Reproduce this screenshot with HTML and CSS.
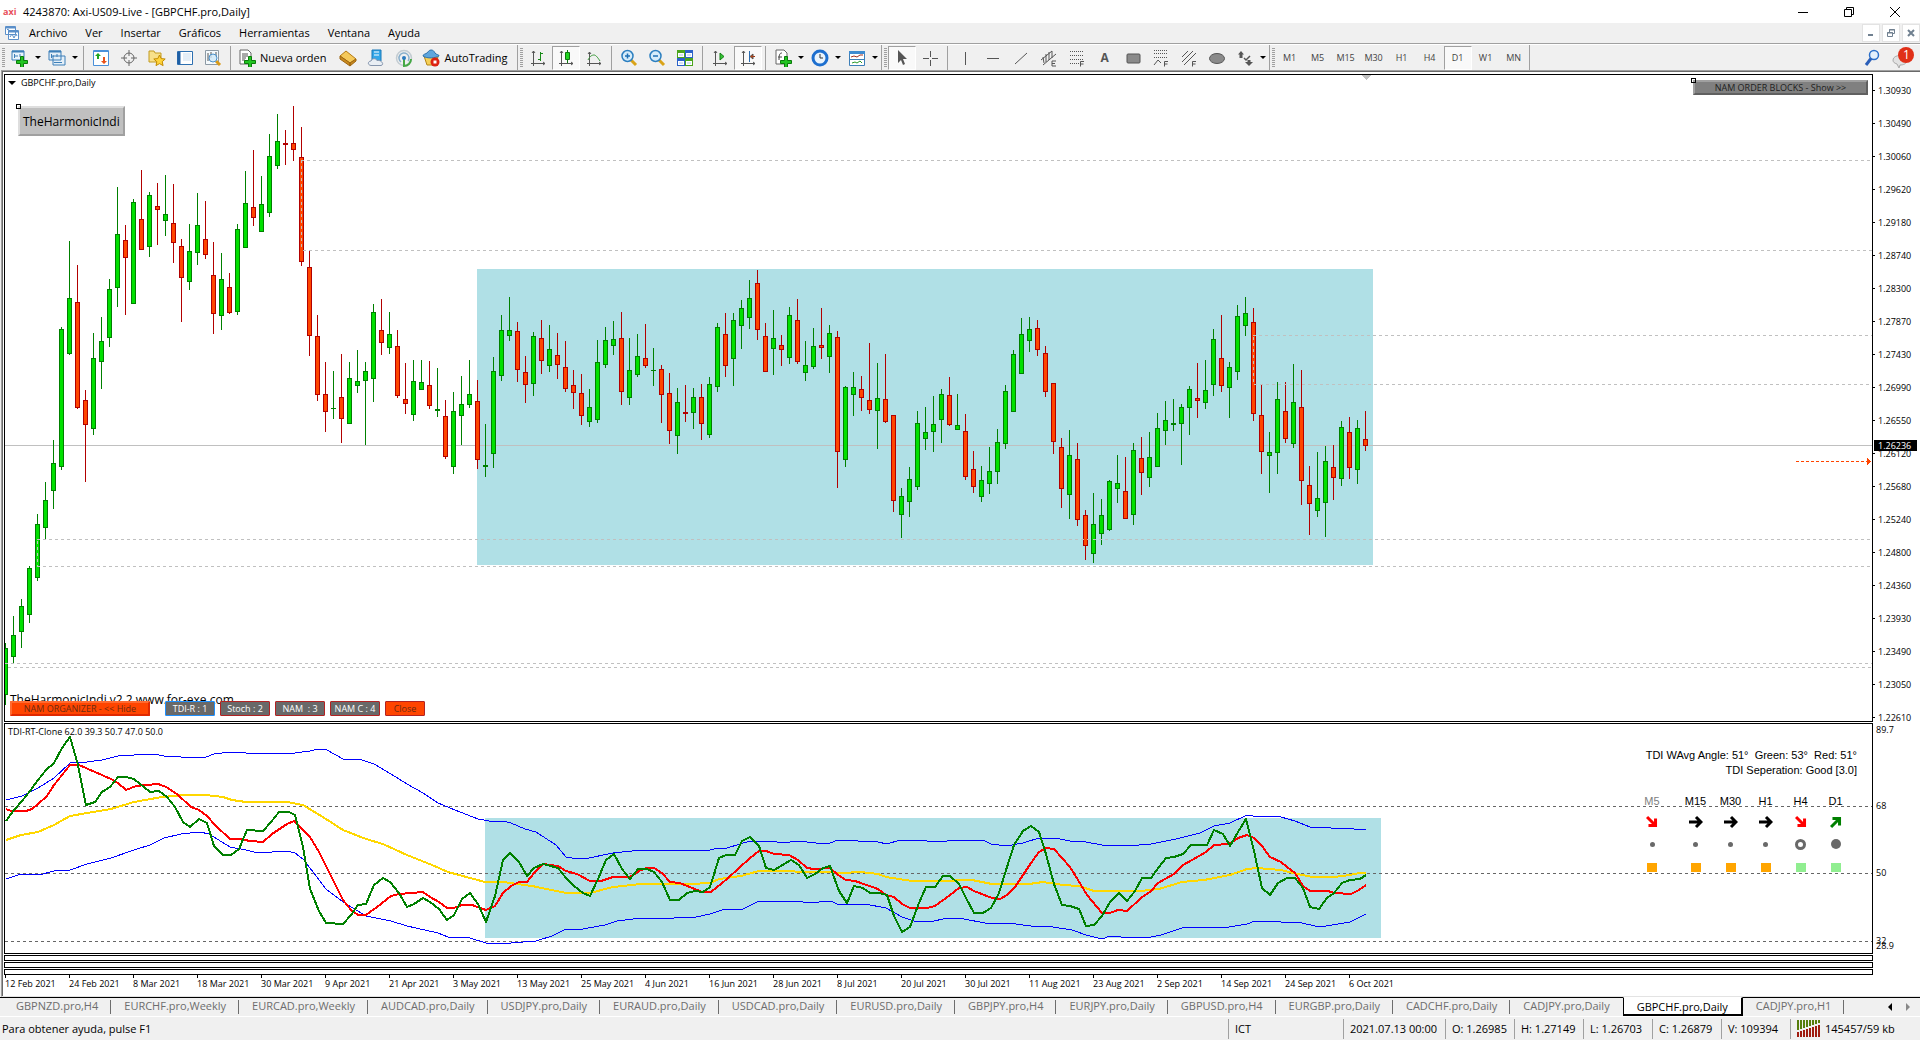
FILE: index.html
```html
<!DOCTYPE html>
<html lang="es">
<head>
    <meta charset="UTF-8">
    <meta name="viewport" content="width=device-width, initial-scale=1.0">
    <title>4243870: Axi-US09-Live - [GBPCHF.pro,Daily]</title>
    <link rel="stylesheet" href="styles.css">
</head>
<body>
    <header class="titlebar">
        <span class="brand">axi</span>
        <h1>4243870: Axi-US09-Live - [GBPCHF.pro,Daily]</h1>
        <button class="win" aria-label="Minimizar"><svg width="12" height="12"><path d="M1 6.500h10" stroke="#000"/></svg></button>
        <button class="win" aria-label="Restaurar"><svg width="12" height="12" fill="none" stroke="#000"><path d="M1.500 3.500h7v7h-7zM3.500 3.500v-2h7v7h-2"/></svg></button>
        <button class="win" aria-label="Cerrar"><svg width="12" height="12"><path d="M1 1l10 10M11 1l-10 10" stroke="#000"/></svg></button>
    </header>

    <nav class="menubar">
        <svg width="16" height="16" viewBox="0 0 16 16" fill="#fff" stroke="#5b8fc9"><path d="M1.500 1.500h10v8h-10zM4.500 5.500h10v9h-10z"/><path d="M2 2.500h9M5 6.500h9" stroke-width="2"/><path d="M3 5l1-1 1 2M6 12l2-3 2 4 2-4 1 2" fill="none"/></svg>
        <button>Archivo</button>
        <button>Ver</button>
        <button>Insertar</button>
        <button>Gráficos</button>
        <button>Herramientas</button>
        <button>Ventana</button>
        <button>Ayuda</button>
        <div class="child-win">
            <button aria-label="Minimizar gráfico"><svg width="8" height="8"><path d="M1 6h5" stroke="#708090" stroke-width="2"/></svg></button>
            <button aria-label="Restaurar gráfico"><svg width="8" height="8" fill="none" stroke="#708090"><path d="M.5 3.500h5v4h-5zM2.500 3v-2.500h5v4h-2"/><path d="M0 4h6M2 1h6"/></svg></button>
            <button aria-label="Cerrar gráfico"><svg width="8" height="8"><path d="M1 1l6 6M7 1l-6 6" stroke="#708090" stroke-width="2"/></svg></button>
        </div>
    </nav>

    <div class="toolbar">
        <i class="grip"></i>
        <button class="drop" aria-label="Nuevo gráfico"><svg class="ico" viewBox="0 0 18 18"><path d="M1 2h12v9H1z" fill="#eaf4fc" stroke="#3d7fb8"/><path d="M1 2.500h12" stroke="#3d7fb8" stroke-width="2"/><path d="M3.500 5v4M3 7h4M9 5v3" stroke="#3d7fb8"/><path d="M9.500 7.500h3v4h4v3h-4v4h-3v-4h-4v-3h4z" fill="#21c421" stroke="#0b7a0b"/></svg></button>
        <button class="drop" aria-label="Perfiles"><svg class="ico" viewBox="0 0 18 18" fill="#e4eff8" stroke="#3d7fb8"><path d="M5 7h12v9H5zM1 2h12v9H1z"/><path d="M1 2.500h12" stroke-width="2"/><path d="M3.500 5v4M3 7h3M9 5v3M14 13.500h-8" fill="none"/></svg></button>
        <i class="sep"></i>
        <button aria-label="Observación del mercado"><svg class="ico" viewBox="0 0 18 18"><path d="M1.500 1.500h15v15h-15z" fill="#fff" stroke="#4a90d9"/><path d="M2 2h14" stroke="#4a90d9" stroke-width="2"/><path d="M6 4l3 3H7v3H5V7H3z" fill="#1fa51f"/><path d="M12 15l-3-3h2V8h2v4h2z" fill="#e8521a"/></svg></button>
        <button aria-label="Ventana de datos"><svg class="ico" viewBox="0 0 18 18" fill="none" stroke="#666"><circle cx="9" cy="9" r="5"/><path d="M9 1v6M9 11v6M1 9h6M11 9h6"/></svg></button>
        <button aria-label="Navegador"><svg class="ico" viewBox="0 0 18 18"><path d="M1 2h5l1 2h6v9H1z" fill="#f7e08a" stroke="#c29b21"/><path d="M11.500 6l1.700 3.600 4 .4-3 2.700.9 3.900-3.600-2-3.500 2 .8-3.900-3-2.700 4-.4z" fill="#ffd43b" stroke="#c28a00"/></svg></button>
        <button aria-label="Terminal"><svg class="ico" viewBox="0 0 18 18"><path d="M1.500 2.500h15v13h-15z" fill="#fff" stroke="#2d6fb0"/><path d="M3 3v12" stroke="#1e5fa5" stroke-width="3"/><path d="M7 5h8M7 7h8M7 9h8M7 11h8" stroke="#c9dcee"/></svg></button>
        <button aria-label="Probador de estrategias"><svg class="ico" viewBox="0 0 18 18"><path d="M1.500 1.500h13v14h-13z" fill="#f5fafd" stroke="#8d9aa5"/><path d="M4 4v8M7 3v6M12 3v5" stroke="#555"/><path d="M12 12l4 4" stroke="#d99a18" stroke-width="3"/><circle cx="9" cy="9" r="4" fill="#cfe8f8" fill-opacity=".8" stroke="#4a90c9"/></svg></button>
        <i class="sep"></i>
        <button class="wide"><svg class="ico" viewBox="0 0 18 18"><path d="M2 1h8l3 3v11H2z" fill="#fff" stroke="#666"/><path d="M4 5h6M4 7h6M4 9h4M4 11h3" stroke="#555"/><path d="M10.500 7.500h3v4h4v3h-4v4h-3v-4h-4v-3h4z" fill="#21c421" stroke="#0b7a0b"/></svg>Nueva orden</button>
        <button aria-label="MetaEditor"><svg class="ico" viewBox="0 0 18 18"><path d="M7 2l10 8-6 4L1 7z" fill="#f5c95a" stroke="#b57a12"/><path d="M1 7v3l10 7v-3zM11 17l6-5v-2l-6 4z" fill="#c98a1e" stroke="#9c6410"/></svg></button>
        <button aria-label="VPS"><svg class="ico" viewBox="0 0 18 18"><path d="M5 1h9v11H5z" fill="#35a7e8" stroke="#1878b8"/><path d="M7 3h5M7 6h5" stroke="#fff"/><path d="M4 16.500c-4-.5-3-4.500 0-4.500 1-3 5-3 6-.5 4-1 8 4 4 5z" fill="#e9eef4" stroke="#8595ad"/></svg></button>
        <button aria-label="Señales"><svg class="ico" viewBox="0 0 18 18" fill="none"><circle cx="9" cy="9" r="7.500" stroke="#c3ccd2" stroke-width="1.500"/><path d="M6 13a5 5 0 1 1 7-1" stroke="#8ab0cc" stroke-width="1.500"/><path d="M9 9v8c4 0 7-3 7-7" stroke="#45a845" stroke-width="2"/><circle cx="9" cy="9" r="2" fill="#2b7abf"/></svg></button>
        <button class="wide"><svg class="ico" viewBox="0 0 18 18"><path d="M2 7l3 9h8l3-8z" fill="#f5d057" stroke="#b58516"/><path d="M1 7c0-2 3-2 4-3s2-3 4-3 3 1 4 3 4 1 4 3c-3 2-12 3-16 0z" fill="#5fa6dd" stroke="#2d72ad"/><circle cx="13" cy="13" r="4.500" fill="#dd2211"/><path d="M11.500 11.500h3v3h-3z" fill="#fff"/></svg>AutoTrading</button>
        <i class="end"></i>

        <i class="grip"></i>
        <button aria-label="Gráfico de barras"><svg class="ico" viewBox="0 0 18 18" fill="none" stroke="#555"><path d="M4.500 2v15M2 14.500h14M3 4l1.500-2L6 4M14 13l2 1.500L14 16"/><path d="M11.500 3v9M11 4.500h3M9 10.500h3" stroke="#178a17"/></svg></button>
        <button class="on" aria-label="Velas japonesas"><svg class="ico" viewBox="0 0 18 18" fill="none" stroke="#555"><path d="M4.500 2v15M2 14.500h14M3 4l1.500-2L6 4M14 13l2 1.500L14 16"/><path d="M10.500 1v13" stroke="#0c780c"/><path d="M8.500 3.500h4v7h-4z" fill="#21d421" stroke="#0c780c"/></svg></button>
        <button aria-label="Gráfico de línea"><svg class="ico" viewBox="0 0 18 18" fill="none" stroke="#555"><path d="M4.500 3v14M2 14.500h14M3 5l1.500-2L6 5M14 13l2 1.500L14 16"/><path d="M3 11c2-4 4-5 6-5s4 3 6 6" stroke="#3a9a3a"/></svg></button>
        <i class="sep"></i>
        <button aria-label="Acercar"><svg class="ico" viewBox="0 0 18 18"><path d="M11 11l5 5" stroke="#d9a318" stroke-width="3"/><circle cx="7.500" cy="7" r="5.500" fill="#d5ecfa" stroke="#2c7fc0" stroke-width="1.500"/><path d="M5 7h5M7.500 4.500v5" stroke="#1d6fb5" stroke-width="1.500"/></svg></button>
        <button aria-label="Alejar"><svg class="ico" viewBox="0 0 18 18"><path d="M11 11l5 5" stroke="#d9a318" stroke-width="3"/><circle cx="7.500" cy="7" r="5.500" fill="#d5ecfa" stroke="#2c7fc0" stroke-width="1.500"/><path d="M5 7h5" stroke="#1d6fb5" stroke-width="1.500"/></svg></button>
        <button aria-label="Mosaico"><svg class="ico" viewBox="0 0 18 18"><path d="M1 1h8v8H1zM9 9h8v8H9z" fill="#4aa51c"/><path d="M9 1h8v8H9zM1 9h8v8H1z" fill="#2b62c9"/><path d="M2 4h6v4H2zM10 4h6v4h-6zM2 12h6v4H2zM10 12h6v4h-6z" fill="#fff"/><path d="M3 6h4M11 6h4M3 14h4M11 14h4" stroke="#a9c4e8"/></svg></button>
        <i class="sep"></i>
        <button aria-label="Desplazamiento automático"><svg class="ico" viewBox="0 0 18 18" fill="none" stroke="#555"><path d="M4.500 2v15M2 14.500h14M3 4l1.500-2L6 4M14 13l2 1.500L14 16"/><path d="M9 4v7l4-3.500z" fill="#35c435" stroke="#148014"/></svg></button>
        <button class="on" aria-label="Desplazar gráfico"><svg class="ico" viewBox="0 0 18 18" fill="none" stroke="#555"><path d="M4.500 2v15M2 14.500h14M3 4l1.500-2L6 4M14 13l2 1.500L14 16"/><path d="M10.500 2v11" stroke="#2b6cb0"/><path d="M16 7.500h-3" stroke="#b33000"/><path d="M11 7.500l3-2.500v5z" fill="#d33c00"/></svg></button>
        <i class="sep"></i>
        <button class="drop" aria-label="Indicadores"><svg class="ico" viewBox="0 0 18 18"><path d="M2 1h8l3 3v11H2z" fill="#fff" stroke="#666"/><path d="M5 11c0-6 1-7 3-7M4 8h4" stroke="#444" fill="none"/><path d="M10.500 7.500h3v4h4v3h-4v4h-3v-4h-4v-3h4z" fill="#21c421" stroke="#0b7a0b"/></svg></button>
        <button class="drop" aria-label="Periodicidad"><svg class="ico" viewBox="0 0 18 18"><circle cx="9" cy="9" r="7" fill="#eaf4fc" stroke="#1d6fcf" stroke-width="3"/><path d="M9 5v4h3" fill="none" stroke="#333"/></svg></button>
        <button class="drop" aria-label="Plantillas"><svg class="ico" viewBox="0 0 18 18"><path d="M1.500 2.500h15v14h-15z" fill="#fff" stroke="#3d7fb8"/><path d="M1 3.500h16" stroke="#3d8bd0" stroke-width="3"/><path d="M2 10.500h14" stroke="#3d7fb8"/><path d="M3 8l3-1 3 1 3-2h3" stroke="#a03020" fill="none"/><path d="M4 14l3-1 2 1 3-2 2 2" stroke="#2a9a2a" fill="none"/></svg></button>
        <i class="end"></i>

        <i class="grip"></i>
        <button class="on" aria-label="Cursor"><svg class="ico" viewBox="0 0 18 18"><path d="M5 1v13l3-3 2 5 2-1-2-5h4z" fill="#555"/></svg></button>
        <button aria-label="Cruz"><svg class="ico" viewBox="0 0 18 18"><path d="M9.500 2v6M9.500 11v6M2 9.500h6M11 9.500h6" stroke="#555"/></svg></button>
        <i class="sep"></i>
        <button aria-label="Línea vertical"><svg class="ico" viewBox="0 0 18 18"><path d="M9.500 3v13" stroke="#555"/></svg></button>
        <button aria-label="Línea horizontal"><svg class="ico" viewBox="0 0 18 18"><path d="M3 9.500h12" stroke="#555"/></svg></button>
        <button aria-label="Línea de tendencia"><svg class="ico" viewBox="0 0 18 18"><path d="M3 15L15 4" stroke="#555"/></svg></button>
        <button aria-label="Canal equidistante"><svg class="ico" viewBox="0 0 18 18" fill="none" stroke="#555"><path d="M1 11L12 2M3 16L16 5M3 8l1 6M6 5v8M9 3v8M12 2v7"/><path d="M16 12h-4v5h4M12 14.500h3"/></svg></button>
        <button aria-label="Retroceso de Fibonacci"><svg class="ico" viewBox="0 0 18 18" fill="none" stroke="#555"><path d="M2 2.500h14M2 6.500h14M2 10.500h14M2 14.500h9" stroke-dasharray="1 1"/><path d="M16 12.500h-3.500v5M12.500 15h3"/></svg></button>
        <button aria-label="Texto"><b class="letter">A</b></button>
        <button aria-label="Rectángulo"><svg class="ico" viewBox="0 0 18 18"><rect x="3" y="5" width="13" height="9" rx="1" fill="#8a8a8a" stroke="#555"/></svg></button>
        <button aria-label="Expansión de Fibonacci"><svg class="ico" viewBox="0 0 18 18" fill="none" stroke="#555"><path d="M2 1.500h14M2 4.500h14M2 8.500h14" stroke-dasharray="1 1"/><path d="M2 16l4-5 3 3M16 12.500h-3.500v5M12.500 15h3"/></svg></button>
        <button aria-label="Canal de Fibonacci"><svg class="ico" viewBox="0 0 18 18" fill="none" stroke="#555"><path d="M2 8l6-6M2 13L13 2M4 16L16 4"/><path d="M16 12.500h-3.500v5M12.500 15h3"/></svg></button>
        <button aria-label="Elipse"><svg class="ico" viewBox="0 0 18 18"><ellipse cx="9" cy="9.500" rx="7.500" ry="5" fill="#8a8a8a" stroke="#555"/></svg></button>
        <button class="drop" aria-label="Flechas"><svg class="ico" viewBox="0 0 18 18" fill="#555"><path d="M5 2l3 3.500H6.500V9h-3V5.500H2zM13 17l-4-4h2.500v-2h3v2H17z"/><path d="M8 9l2 2 4-4" fill="none" stroke="#555" stroke-width="1.500"/></svg></button>
        <i class="end"></i>

        <i class="grip"></i>
        <button class="tf">M1</button>
        <button class="tf">M5</button>
        <button class="tf">M15</button>
        <button class="tf">M30</button>
        <button class="tf">H1</button>
        <button class="tf">H4</button>
        <button class="tf on">D1</button>
        <button class="tf">W1</button>
        <button class="tf">MN</button>
        <i class="end"></i>
        <div class="spacer"></div>
        <button class="search" aria-label="Buscar"><svg class="ico" viewBox="0 0 18 18"><circle cx="11" cy="6" r="4.500" fill="#e3f0fc" stroke="#2b6fc9" stroke-width="1.500"/><path d="M8 9.500L3 16" stroke="#2b5fb9" stroke-width="3"/></svg></button>
        <button class="news" aria-label="Mensajes"><svg width="26" height="26" viewBox="0 0 26 26"><path d="M3 15c0-6 14-6 14 0 0 4-4 5-7 5l-1 3-2-4c-3-1-4-2-4-4z" fill="#e2e2e2" stroke="#aaa"/><circle cx="16" cy="10" r="8" fill="#e03018"/></svg><span>1</span></button>
    </div>

    <main class="chart">
        <section class="pane main-pane">
            <div class="plot">
                <svg class="canvas" shape-rendering="crispEdges">
                    <rect x="472" y="194" width="896" height="296" fill="#b0e0e6"/>
                    <line x1="0" x2="100%" y1="370.500" y2="370.500" stroke="#c0c0c0"/>
                    <g id="candles" transform="translate(-5 -75)"></g>
                    <g stroke="#c0c0c0" stroke-dasharray="3 3">
                        <line x1="296" x2="100%" y1="85.500" y2="85.500"/>
                        <line x1="298" x2="100%" y1="175.500" y2="175.500"/>
                        <line x1="296.500" x2="296.500" y1="85" y2="175"/>
                        <line x1="1248" x2="100%" y1="260.500" y2="260.500"/>
                        <line x1="1249" x2="100%" y1="309.500" y2="309.500"/>
                        <line x1="1248.500" x2="1248.500" y1="262" y2="309"/>
                        <line x1="32" x2="100%" y1="464.500" y2="464.500"/>
                        <line x1="32" x2="100%" y1="491.500" y2="491.500"/>
                        <line x1="32.500" x2="32.500" y1="466" y2="491"/>
                        <line x1="0" x2="100%" y1="588.500" y2="588.500"/>
                        <line x1="3" x2="100%" y1="592.500" y2="592.500"/>
                    </g>
                    <path d="M1356 0h10l-5 5z" fill="#c0c0c0"/>
                </svg>
                <h2 class="symbol"><i class="tri"></i>GBPCHF.pro,Daily</h2>
                <button class="harmonic">TheHarmonicIndi</button>
                <button class="blocks">NAM ORDER BLOCKS - Show &gt;&gt;</button>
                <svg class="stop" width="76" height="7" shape-rendering="crispEdges"><path d="M0 3.500h72" stroke="#ff4500" stroke-dasharray="3 2"/><path d="M71 0v7l4-3.500z" fill="#ff4500"/></svg>
                <div class="organizer">
                    <p>TheHarmonicIndi v2.2 www.for-exe.com</p>
                    <button class="hide">NAM ORGANIZER - &lt;&lt; Hide</button>
                    <button class="first">TDI-R : 1</button>
                    <button>Stoch : 2</button>
                    <button>NAM &nbsp;: 3</button>
                    <button>NAM C : 4</button>
                    <button class="close">Close</button>
                </div>
            </div>
            <ol class="axis">
                <li>1.30930</li><li>1.30490</li><li>1.30060</li><li>1.29620</li><li>1.29180</li>
                <li>1.28740</li><li>1.28300</li><li>1.27870</li><li>1.27430</li><li>1.26990</li>
                <li>1.26550</li><li>1.26120</li><li>1.25680</li><li>1.25240</li><li>1.24800</li>
                <li>1.24360</li><li>1.23930</li><li>1.23490</li><li>1.23050</li><li>1.22610</li>
            </ol>
            <span class="bid">1.26236</span>
        </section>

        <section class="pane tdi">
            <div class="plot">
                <svg class="canvas">
                    <rect x="480" y="94" width="896" height="120" fill="#b0e0e6"/>
                    <g stroke="#666" stroke-dasharray="3 3" shape-rendering="crispEdges">
                        <line x1="0" x2="100%" y1="82.500" y2="82.500"/>
                        <line x1="0" x2="100%" y1="149.500" y2="149.500"/>
                        <line x1="0" x2="100%" y1="217.500" y2="217.500"/>
                    </g>
                    <g transform="translate(-4 -723)" fill="none" stroke-linejoin="round" shape-rendering="crispEdges">
                        <polyline class="band" points="5,799 21,795 37,787 53,777 69,762 86,761 101,759 117,755 133,754 153,753 163,755 180,756 205,756 213,753 229,751 245,752 294,752 309,750 317,748 326,749 342,758 361,759 373,763 390,773 406,783 422,792 437,802 454,809 477,818 494,821 502,820 510,822 524,828 535,831 555,844 565,856 571,857 588,857 612,852 640,849 709,849 717,847 726,847 749,840 770,840 782,842 797,840 815,842 829,842 837,839 877,841 886,843 899,839 926,840 946,840 956,839 982,839 990,843 1005,845 1022,842 1038,837 1054,837 1069,840 1085,841 1101,844 1126,845 1150,843 1175,838 1199,832 1213,825 1229,822 1246,814 1252,815 1280,816 1294,820 1309,826 1327,826 1333,828 1341,827 1353,828 1365,828"/>
                        <polyline class="band" points="5,878 20,873 38,874 53,870 69,869 86,863 110,857 133,849 149,844 163,837 180,833 199,831 208,833 229,846 245,849 257,852 286,850 294,852 302,858 309,867 325,888 342,901 365,915 390,920 406,925 437,932 447,936 469,937 485,942 510,942 535,940 551,935 565,928 582,928 604,924 616,920 640,917 660,917 669,918 677,916 695,916 709,913 724,908 742,908 758,900 797,900 807,902 830,900 838,904 864,903 885,907 901,916 913,920 933,920 942,918 958,917 989,923 1007,922 1030,925 1052,926 1071,929 1085,934 1101,938 1109,935 1120,936 1150,936 1160,934 1181,927 1199,926 1222,927 1246,923 1254,920 1280,921 1296,921 1319,926 1349,921 1365,913"/>
                        <polyline class="mid" points="5,839 20,834 37,831 53,824 69,815 86,812 110,808 133,801 161,796 184,794 204,794 222,796 231,799 245,801 286,801 302,804 325,818 342,829 365,838 382,843 406,854 431,864 447,871 469,877 484,881 502,881 531,885 565,892 589,892 612,886 640,883 689,883 709,882 718,878 740,875 758,870 829,871 840,872 860,871 877,873 885,876 911,880 938,880 971,879 991,883 1028,883 1042,881 1062,884 1078,885 1093,890 1140,890 1158,888 1181,881 1203,879 1229,874 1246,868 1256,867 1280,869 1292,872 1311,876 1333,876 1349,874 1358,872 1365,872"/>
                        <polyline class="slow" points="5,808 10,810 25,810 31,808 37,803 46,795 53,784 69,764 78,764 94,771 110,778 117,782 125,789 135,785 157,783 165,786 176,793 190,806 198,809 206,815 214,824 229,838 239,838 249,840 262,841 271,833 286,823 293,820 309,836 318,851 325,865 342,899 350,909 357,914 365,914 376,906 390,895 398,893 422,891 429,896 438,901 446,907 453,907 461,904 471,904 485,909 494,905 502,892 510,885 518,881 526,881 533,872 542,863 557,865 565,870 576,873 589,880 600,880 612,876 629,876 640,869 646,867 653,867 661,872 669,881 679,882 701,891 710,891 726,878 749,857 758,850 765,850 773,853 788,854 797,859 806,867 813,868 829,867 837,874 845,879 854,880 877,888 885,894 893,896 901,903 909,907 926,907 934,905 949,894 958,887 966,886 973,890 991,897 999,898 1006,894 1014,886 1030,862 1038,851 1045,847 1053,848 1069,866 1077,879 1086,894 1101,912 1109,912 1117,909 1126,910 1140,897 1150,890 1157,882 1173,873 1182,864 1191,859 1205,851 1213,844 1228,843 1237,837 1246,834 1253,837 1261,845 1269,856 1280,861 1286,866 1294,872 1302,885 1309,890 1327,890 1333,892 1350,893 1358,889 1365,884"/>
                        <polyline class="fast" points="5,820 13,809 21,800 29,790 37,779 45,769 53,762 61,747 69,736 77,764 85,804 94,801 101,791 109,786 117,776 125,776 133,778 149,791 158,790 166,796 174,806 182,821 189,826 198,818 206,822 213,845 222,854 230,854 238,848 246,829 262,830 270,821 278,811 288,811 294,814 302,846 309,888 318,910 325,922 342,923 350,914 357,904 365,903 373,884 382,877 389,881 398,892 406,906 413,903 422,897 429,901 438,908 446,919 453,914 461,898 469,892 477,903 485,921 494,895 502,859 509,852 518,861 526,875 533,867 542,863 557,867 565,877 573,885 582,892 589,895 597,878 605,859 613,853 621,868 629,878 637,868 646,868 653,871 661,881 669,899 678,899 686,892 694,890 702,891 709,886 718,857 725,854 734,854 741,840 749,836 758,845 765,867 773,869 790,859 798,864 806,877 814,873 822,867 829,865 838,890 846,902 853,885 862,887 869,892 878,892 886,894 893,915 901,931 909,926 918,902 925,886 934,886 942,875 949,875 958,883 965,897 973,912 982,912 990,907 998,892 1006,866 1013,844 1022,830 1030,825 1038,831 1045,853 1053,883 1061,904 1069,905 1078,908 1085,925 1093,924 1101,915 1109,901 1118,892 1126,900 1134,890 1141,877 1150,877 1158,866 1165,857 1173,856 1182,853 1190,844 1206,844 1213,829 1222,833 1229,845 1237,831 1245,818 1253,850 1261,887 1269,894 1277,882 1286,877 1294,877 1302,887 1309,906 1318,908 1326,897 1333,892 1341,882 1349,879 1359,878 1365,874"/>
                    </g>
                </svg>
                <h2 class="symbol">TDI-RT-Clone 62.0 39.3 50.7 47.0 50.0</h2>
                <div class="summary">
                    <p>TDI WAvg Angle: 51° &nbsp;Green: 53° &nbsp;Red: 51°</p>
                    <p>TDI Seperation: Good [3.0]</p>
                </div>
                <table class="signals">
                    <tr><th class="dim">M5</th><th>M15</th><th>M30</th><th>H1</th><th>H4</th><th>D1</th></tr>
                    <tr class="arrows" id="arrows"></tr>
                    <tr class="dots">
                        <td><i></i></td><td><i></i></td><td><i></i></td><td><i></i></td><td><i class="ring"></i></td><td><i class="full"></i></td>
                    </tr>
                    <tr class="boxes">
                        <td><i></i></td><td><i></i></td><td><i></i></td><td><i></i></td><td><i class="ok"></i></td><td><i class="ok"></i></td>
                    </tr>
                </table>
            </div>
            <div class="levels">
                <span class="max">89.7</span>
                <span class="l68">68</span>
                <span class="l50">50</span>
                <span class="l32">32</span>
                <span class="min">28.9</span>
            </div>
        </section>
        <div class="strip"></div>
        <div class="strip"></div>
        <div class="strip"></div>
        <ol class="dates">
            <li>12 Feb 2021</li><li>24 Feb 2021</li><li>8 Mar 2021</li><li>18 Mar 2021</li><li>30 Mar 2021</li>
            <li>9 Apr 2021</li><li>21 Apr 2021</li><li>3 May 2021</li><li>13 May 2021</li><li>25 May 2021</li>
            <li>4 Jun 2021</li><li>16 Jun 2021</li><li>28 Jun 2021</li><li>8 Jul 2021</li><li>20 Jul 2021</li>
            <li>30 Jul 2021</li><li>11 Aug 2021</li><li>23 Aug 2021</li><li>2 Sep 2021</li><li>14 Sep 2021</li>
            <li>24 Sep 2021</li><li>6 Oct 2021</li>
        </ol>
    </main>

    <nav class="tabs">
        <button>GBPNZD.pro,H4</button>
        <button>EURCHF.pro,Weekly</button>
        <button>EURCAD.pro,Weekly</button>
        <button>AUDCAD.pro,Daily</button>
        <button>USDJPY.pro,Daily</button>
        <button>EURAUD.pro,Daily</button>
        <button>USDCAD.pro,Daily</button>
        <button>EURUSD.pro,Daily</button>
        <button>GBPJPY.pro,H4</button>
        <button>EURJPY.pro,Daily</button>
        <button>GBPUSD.pro,H4</button>
        <button>EURGBP.pro,Daily</button>
        <button>CADCHF.pro,Daily</button>
        <button class="last">CADJPY.pro,Daily</button>
        <button class="active">GBPCHF.pro,Daily</button>
        <button>CADJPY.pro,H1</button>
        <div class="scroll">
            <button aria-label="Anterior"><svg width="4" height="8"><path d="M4 0v8L0 4z"/></svg></button>
            <button aria-label="Siguiente"><svg width="4" height="8"><path d="M0 0v8l4-4z" fill="#888"/></svg></button>
        </div>
    </nav>

    <footer class="status">
        <span class="help">Para obtener ayuda, pulse F1</span>
        <span class="profile">ICT</span>
        <span class="time">2021.07.13 00:00</span>
        <span>O: 1.26985</span>
        <span>H: 1.27149</span>
        <span>L: 1.26703</span>
        <span>C: 1.26879</span>
        <span>V: 109394</span>
        <span class="net"><svg width="24" height="17" shape-rendering="crispEdges"><path id="net-in" stroke="#567d0c" stroke-width="2"/><path id="net-out" stroke="#a01c10" stroke-width="2"/></svg>145457/59 kb</span>
    </footer>
    <script src="script.js"></script>
</body>
</html>
```
FILE: script.js
```js
// direction, high, body top, body bottom, low - one bar every 8px
const bars = `
u 643 648 695 705|u 616 635 657 663|u 599 606 632 648|u 566 568 615 623|u 514 524 578 581
u 482 500 528 539|u 440 463 491 509|u 327 329 467 470|u 241 298 354 355|d 265 302 408 409
d 390 400 425 482|u 333 358 429 435|u 317 341 362 389|u 279 289 338 347|u 187 234 288 307
d 225 240 258 315|u 199 202 304 304|d 170 219 250 250|u 192 195 247 257|d 183 206 210 245
u 175 214 221 236|d 184 223 243 263|d 239 246 278 322|u 224 251 282 290|u 193 225 253 265
d 201 239 255 259|d 242 275 314 334|u 253 279 316 330|d 273 287 313 314|u 224 229 312 315
u 171 203 248 248|d 150 207 218 226|u 176 204 232 232|u 134 156 213 217|u 114 141 166 169
d 130 143 145 165|d 106 143 150 161|d 127 157 262 266|d 251 267 336 356|d 315 336 395 401
d 362 394 412 432|u 371 408 409 419|d 354 397 419 443|u 362 378 424 424|u 350 381 386 393
u 362 371 381 445|u 304 312 379 402|d 299 330 343 355|u 312 334 348 354|d 330 346 396 398
d 363 399 404 414|u 360 381 415 421|u 360 382 390 390|d 361 385 406 409|u 368 409 411 417
d 400 416 457 459|u 392 411 467 474|u 376 404 416 445|u 360 394 405 408|d 380 401 460 469
u 424 465 467 477|u 357 371 454 468|u 315 330 376 381|u 297 330 336 341|d 322 331 370 382
d 356 372 385 403|u 332 336 384 396|d 320 338 361 374|u 325 349 366 372|d 333 355 365 379
d 341 367 389 392|d 370 385 393 409|d 374 393 416 425|u 389 407 422 427|u 340 362 420 423
u 327 340 365 368|u 321 339 346 355|d 312 338 392 405|u 338 370 398 405|u 334 356 375 377
d 324 358 366 368|u 348 370 371 386|d 365 369 395 423|d 373 393 431 444|u 388 402 436 454
d 385 412 414 422|u 388 397 413 429|d 384 397 424 440|u 377 384 435 438|u 323 327 387 392
d 313 334 366 377|u 313 320 359 386|u 300 308 326 349|u 280 298 318 329|d 270 283 330 340
d 323 336 372 372|u 310 338 349 375|d 335 345 350 366|u 307 315 358 364|d 299 320 362 364
u 341 365 373 381|u 328 346 367 369|d 308 345 348 359|u 325 333 357 373|d 331 337 452 488
u 386 387 460 467|u 372 387 395 416|d 376 389 398 411|d 343 400 410 414|u 363 398 411 449
d 354 399 422 423|d 415 415 501 512|u 488 496 515 538|u 467 479 502 517|u 411 423 487 490
u 407 432 439 450|u 396 424 432 452|u 389 394 420 443|d 377 395 425 426|u 394 425 430 430
d 414 431 477 480|d 451 469 487 493|u 466 480 497 502|u 447 471 484 494|u 429 442 472 484
u 385 391 444 449|u 350 354 412 412|u 318 334 374 374|u 317 329 341 352|d 320 328 350 356
d 346 353 392 397|d 383 383 442 454|d 438 447 489 508|u 430 455 495 519|d 443 459 520 526
d 510 515 546 560|u 493 524 554 563|u 499 515 534 545|u 480 481 530 531|u 455 483 489 503
d 457 491 519 519|u 443 450 515 525|d 437 458 473 495|u 432 457 478 487|u 413 428 467 467
u 401 420 431 445|u 399 423 425 431|u 404 407 424 465|u 386 389 408 435|d 363 398 401 418
u 360 390 403 409|u 329 339 385 396|d 315 358 386 392|u 362 367 388 418|u 305 316 372 380
u 297 313 326 336|d 308 322 414 421|d 385 415 452 474|u 432 452 456 493|u 382 399 453 474
d 382 411 439 443|u 364 402 444 448|d 370 407 481 505|d 466 485 504 535|u 452 498 511 517
u 446 461 503 537|d 445 467 478 500|u 421 427 479 486|d 417 432 468 479|u 420 428 470 484
d 411 439 446 451`.trim().split(/[|\n]/);

const NS = 'http://www.w3.org/2000/svg';
const candles = document.getElementById('candles');

function rect(x, y, w, h, fill) {
    if (h <= 0 || w <= 0) return;
    const r = document.createElementNS(NS, 'rect');
    r.setAttribute('x', x);
    r.setAttribute('y', y);
    r.setAttribute('width', w);
    r.setAttribute('height', h);
    r.setAttribute('fill', fill);
    candles.appendChild(r);
}

bars.forEach((bar, i) => {
    const [dir, ...v] = bar.split(' ');
    const [high, top, bottom, low] = v.map(Number);
    const x = 5 + i * 8;
    const edge = dir === 'u' ? '#008000' : '#b20000';
    const fill = dir === 'u' ? '#00e000' : '#ff4500';
    rect(x, high, 1, low - high, edge);
    rect(x - 2, top, 5, bottom - top, edge);
    rect(x - 1, top + 1, 3, bottom - top - 2, fill);
});

// trend arrows of the signal table: colour and rotation
const arrows = [['red', 45], ['black', 0], ['black', 0], ['black', 0], ['red', 45], ['green', -45]];
document.getElementById('arrows').innerHTML = arrows.map(([color, deg]) =>
    `<td><svg width="14" height="14" viewBox="-7 -7 14 14"><g transform="rotate(${deg})" fill="none" stroke="${color}" stroke-width="3"><path d="M-7 0H5M0 -5L5 0L0 5"/></g></svg></td>`
).join('');

// traffic meter in the status bar
let inPath = '', outPath = '';
for (let i = 0; i < 8; i++) {
    const x = 1 + i * 3;
    const split = 12 - i;
    inPath += `M${x} 0V${split - 2}`;
    outPath += `M${x} ${split}V17`;
}
document.getElementById('net-in').setAttribute('d', inPath);
document.getElementById('net-out').setAttribute('d', outPath);
```
FILE: styles.css
```css
* {
    box-sizing: border-box;
}
body {
    margin: 0;
    height: 100vh;
    display: flex;
    flex-direction: column;
    background: #f0f0f0;
    color: #000;
    font: 11px/16px "Open Sans", "Noto Sans", sans-serif;
    overflow: hidden;
}
h1, h2, p, ol {
    margin: 0;
    padding: 0;
    font: inherit;
}
ol {
    list-style: none;
}
button {
    margin: 0;
    padding: 0;
    border: 0;
    background: none;
    color: inherit;
    font: inherit;
    white-space: nowrap;
}
svg {
    display: block;
    flex: none;
}

/* title and menu */
.titlebar {
    flex: none;
    display: flex;
    align-items: center;
    height: 23px;
    padding: 0 2px 0 3px;
    background: #fff;
}
.titlebar h1 {
    flex: 1;
    font-size: 11px;
}
.brand {
    width: 20px;
    color: #e8505b;
    font-weight: bold;
    font-size: 9px;
}
.win {
    width: 46px;
    display: flex;
    justify-content: center;
}
.menubar {
    flex: none;
    display: flex;
    align-items: center;
    height: 21px;
    padding-left: 4px;
    border-bottom: 1px solid #a0a0a0;
}
.menubar > button {
    padding: 0 9px;
}
.child-win {
    display: flex;
    gap: 2px;
    margin-left: auto;
}
.child-win button {
    display: flex;
    align-items: center;
    justify-content: center;
    width: 18px;
    height: 18px;
    background: #fff;
    border: 1px solid #e3e3e3;
}

/* toolbar */
.toolbar {
    flex: none;
    display: flex;
    align-items: center;
    height: 26px;
    border-top: 1px solid #fff;
}
.toolbar button {
    display: flex;
    align-items: center;
    justify-content: center;
    flex: none;
    width: 28px;
    height: 24px;
    color: #000;
}
.toolbar .on {
    background: #f9f9f9;
    border: 1px solid #fff;
    border-top-color: #a0a0a0;
    border-left-color: #a0a0a0;
}
.toolbar .drop {
    width: 37px;
    justify-content: flex-start;
    padding-left: 5px;
    gap: 6px;
}
.toolbar .drop::after {
    content: "";
    border: 3px solid transparent;
    border-top-color: #000;
    border-bottom: 0;
}
.toolbar .wide {
    width: auto;
    padding: 0 8px 0 4px;
    gap: 4px;
    font-size: 11px;
}
.toolbar .tf {
    color: #444;
    font-size: 9px;
}
.toolbar .search {
    margin-right: 4px;
}
.toolbar .news {
    position: relative;
    width: 26px;
    margin-right: 4px;
}
.news span {
    position: absolute;
    left: 13px;
    top: 1px;
    color: #fff;
    font-size: 12px;
}
.ico {
    width: 18px;
    height: 18px;
}
.letter {
    color: #555;
    font-size: 12px;
}
.grip {
    width: 3px;
    height: 20px;
    margin: 0 1px 0 2px;
    background: repeating-linear-gradient(#a0a0a0 0 1px, #f0f0f0 1px 2px);
}
.sep, .end {
    width: 1px;
    height: 24px;
    margin: 0 3px;
    background: #a0a0a0;
}
.end {
    height: 25px;
    margin: 0 0 0 1px;
}
.spacer {
    flex: 1;
}

/* chart window */
.chart {
    flex: 1;
    min-height: 0;
    display: flex;
    flex-direction: column;
    gap: 1px;
    margin-left: 1px;
    padding: 3px 0 0 2px;
    background: #fff;
    border-left: 1px solid #a0a0a0;
    border-top: 1px solid #a0a0a0;
    border-bottom: 1px solid #e3e3e3;
    box-shadow: inset 1px 1px #696969;
    font-size: 9px;
    line-height: 12px;
}
.pane {
    position: relative;
    display: grid;
    grid-template: minmax(0, 1fr) / 1fr 47px;
}
.plot {
    position: relative;
    border: 1px solid #000;
    overflow: hidden;
}
.canvas {
    position: absolute;
    width: 100%;
    height: 100%;
}
.main-pane {
    flex: 1;
    min-height: 0;
}
.symbol {
    position: absolute;
    left: 3px;
    top: 2px;
    display: flex;
    align-items: center;
    gap: 5px;
}
.tri {
    border: 4px solid transparent;
    border-top-color: #000;
    border-bottom: 0;
}
.harmonic, .blocks {
    position: absolute;
    border: 2px solid;
}
.harmonic::before, .blocks::before {
    content: "";
    position: absolute;
    left: -4px;
    top: -4px;
    width: 3px;
    height: 3px;
    border: 1px solid #000;
}
.harmonic {
    left: 13px;
    top: 31px;
    height: 30px;
    padding: 1px 3px 0;
    background: #c0c0c0;
    border-color: #dedede #a0a0a0 #a0a0a0 #dedede;
    font-size: 12px;
}
.blocks {
    right: 4px;
    top: 5px;
    width: 175px;
    height: 15px;
    background: #808080;
    border-color: #a0a0a0 #606060 #606060 #a0a0a0;
    color: #202020;
    line-height: 11px;
}
.stop {
    position: absolute;
    right: 0;
    top: 383px;
}
.organizer {
    position: absolute;
    left: 5px;
    bottom: 5px;
    display: flex;
    gap: 5px;
}
.organizer p {
    position: absolute;
    left: 0;
    bottom: 8px;
    font-size: 12px;
    line-height: 16px;
    white-space: nowrap;
}
.organizer button {
    position: relative;
    width: 50px;
    height: 15px;
    background: #696969;
    border: 1px solid #b22222;
    border-radius: 1px;
    color: #fff;
    line-height: 12px;
}
.organizer .hide {
    width: 140px;
    margin-right: 10px;
    background: #ff4500;
    border: 2px solid;
    border-color: #ff6a30 #e02800 #e02800 #ff6a30;
    color: #6b2a10;
    line-height: 10px;
}
.organizer .first {
    border-color: #1e90ff;
}
.organizer .close {
    width: 40px;
    background: #ff4500;
    color: #6b2a10;
}
.axis li {
    height: 33px;
    padding-left: 5px;
    line-height: 33px;
    background: linear-gradient(#000, #000) 0 50% / 2px 1px no-repeat;
}
.bid {
    position: absolute;
    right: 3px;
    top: 366px;
    width: 43px;
    padding-left: 4px;
    background: #000;
    color: #fff;
    line-height: 11px;
}

/* indicator */
.tdi {
    height: 231px;
}
.band {
    stroke: #00f;
}
.mid {
    stroke: gold;
    stroke-width: 2px;
}
.slow {
    stroke: red;
    stroke-width: 2px;
}
.fast {
    stroke: green;
    stroke-width: 2px;
}
.summary {
    position: absolute;
    right: 15px;
    top: 24px;
    text-align: right;
    font: 11px/15px "Liberation Sans", Arial, sans-serif;
}
.signals {
    position: absolute;
    right: 19px;
    top: 69px;
    border-collapse: collapse;
    font: 11px/16px "Liberation Sans", Arial, sans-serif;
}
.signals th, .signals td {
    width: 35px;
    padding: 0;
    font-weight: normal;
    text-align: center;
}
.signals th:first-child {
    width: 52px;
}
.signals .dim {
    color: #808080;
}
.arrows td {
    height: 26px;
}
.arrows svg, .signals i {
    display: block;
    margin: 0 auto;
}
.dots td {
    height: 18px;
}
.boxes td {
    height: 28px;
}
.dots i {
    width: 5px;
    height: 5px;
    border-radius: 50%;
    background: #696969;
}
.dots .ring {
    width: 11px;
    height: 11px;
    border: 3px solid #696969;
    background: none;
}
.dots .full {
    width: 10px;
    height: 10px;
}
.boxes i {
    width: 10px;
    height: 9px;
    background: orange;
}
.boxes .ok {
    background: lightgreen;
}
.levels {
    position: relative;
}
.levels span {
    position: absolute;
    left: 3px;
}
.levels .max {
    top: 1px;
}
.levels .l68 {
    top: 77px;
}
.levels .l50 {
    top: 144px;
}
.levels .l32 {
    top: 212px;
}
.levels .min {
    top: 217px;
}
.strip {
    flex: none;
    height: 6px;
    margin-right: 47px;
    border: 1px solid #000;
}
.dates {
    display: flex;
    height: 21px;
    margin-top: -1px;
    padding-left: 1px;
}
.dates li {
    flex: none;
    width: 64px;
    padding-top: 3px;
    line-height: 12px;
    white-space: nowrap;
    background: linear-gradient(#000, #000) 0 0 / 1px 3px no-repeat;
}

/* chart tabs and status line */
.tabs {
    flex: none;
    display: flex;
    height: 20px;
    padding-left: 3px;
    border-top: 1px solid #000;
    border-bottom: 1px solid #fff;
}
.tabs > button {
    height: 18px;
    padding: 0 13px 2px;
    color: #6d6d6d;
    background: linear-gradient(#6d6d6d, #6d6d6d) 100% 50% / 1px 14px no-repeat;
}
.tabs .last {
    background: none;
}
.tabs .active {
    margin-top: -1px;
    height: 19px;
    padding-bottom: 0;
    background: #fff;
    border: 1px solid #000;
    border-top-color: #fff;
    border-right-width: 2px;
    border-bottom-width: 2px;
    color: #000;
    line-height: 15px;
}
.scroll {
    display: flex;
    align-items: center;
    gap: 14px;
    margin-left: auto;
    padding-right: 10px;
}
.status {
    flex: none;
    display: flex;
    align-items: center;
    height: 23px;
}
.status span {
    width: 69px;
    padding-left: 6px;
    border-left: 1px solid #a0a0a0;
    line-height: 20px;
    white-space: nowrap;
}
.status .help {
    flex: 1;
    padding-left: 2px;
    border: 0;
}
.status .profile {
    width: 115px;
}
.status .time {
    width: 102px;
}
.status .net {
    display: flex;
    align-items: center;
    gap: 4px;
    width: 130px;
}
```
